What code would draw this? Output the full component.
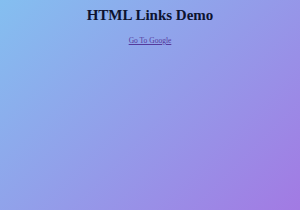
import React from "react";

const App: React.FC = () => {
  return (
    <div className="w-[300px] h-[210px] bg-[linear-gradient(135deg,#84bff0,#a27ae3)] font-['Liberation_Serif',serif] text-center pt-[8px]">
      <h1 className="text-[15px] font-bold text-[#0d1330] leading-[15px]">HTML Links Demo</h1>
      <div className="mt-[10px] leading-[9px]">
        <a href="#" className="text-[7.5px] text-[#553a9c] underline">
          Go To Google
        </a>
      </div>
    </div>
  );
};

export default App;
